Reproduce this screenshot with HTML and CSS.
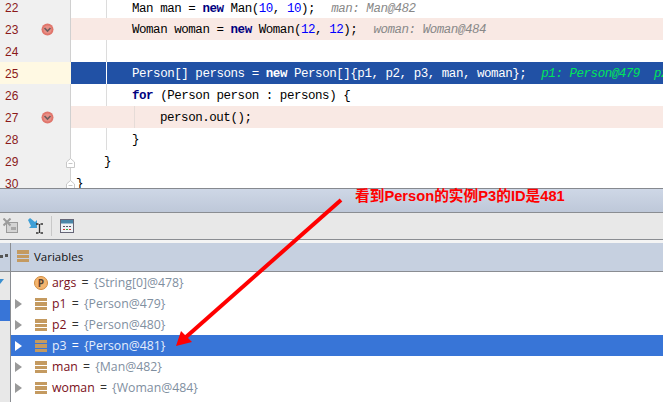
FILE: index.html
```html
<!DOCTYPE html>
<html lang="en">
<head>
<meta charset="utf-8">
<title>Debugger</title>
<link rel="stylesheet" href="styles.css">
</head>
<body>
<div class="app">
  <section class="editor">
    <div class="line first"><span class="num">22</span><span class="gut"></span><code class="code"><span class="i3"></span>Man man = <b>new</b> Man(<i>10</i>, <i>10</i>);<em class="hint">man: Man@482</em></code></div>
    <div class="line bp"><span class="num">23</span><span class="gut"><svg class="bpi" viewBox="0 0 13 13"><circle cx="6.5" cy="6.500" r="6" fill="#e0766c"/><circle cx="6.5" cy="6.500" r="4" fill="#e88f86"/><path d="M3.5 5l3 3 3-3" fill="none" stroke="#6e5f5f" stroke-width="1.7"/></svg></span><code class="code"><span class="i3"></span>Woman woman = <b>new</b> Woman(<i>12</i>, <i>12</i>);<em class="hint">woman: Woman@484</em></code></div>
    <div class="line"><span class="num">24</span><span class="gut"></span><code class="code"></code></div>
    <div class="line cur"><span class="num">25</span><span class="gut"></span><code class="code"><span class="i3"></span>Person[] persons = <b>new</b> Person[]{p1, p2, p3, man, woman};<em class="hint">p1: Person@479</em><em class="hint h2">p2: Person@480</em></code></div>
    <div class="line"><span class="num">26</span><span class="gut"></span><code class="code"><span class="i3"></span><b>for</b> (Person person : persons) {</code></div>
    <div class="line bp"><span class="num">27</span><span class="gut"><svg class="bpi" viewBox="0 0 13 13"><circle cx="6.5" cy="6.500" r="6" fill="#e0766c"/><circle cx="6.5" cy="6.500" r="4" fill="#e88f86"/><path d="M3.5 5l3 3 3-3" fill="none" stroke="#6e5f5f" stroke-width="1.7"/></svg></span><code class="code inner"><span class="i4"></span>person.out();</code></div>
    <div class="line"><span class="num">28</span><span class="gut"></span><code class="code"><span class="i3"></span>}</code></div>
    <div class="line noguide"><span class="num">29</span><span class="gut"><svg class="fold" viewBox="0 0 9 10"><path d="M.5 9.500V4L4.500.5 8.500 4v5.500z" fill="#fff" stroke="#c8c8c8"/><path d="M2.500 5.500h4" stroke="#c8c8c8"/></svg></span><code class="code"><span class="i2"></span>}</code></div>
    <div class="line noguide"><span class="num">30</span><span class="gut"><svg class="fold" viewBox="0 0 9 10"><path d="M.5 9.500V4L4.500.5 8.500 4v5.500z" fill="#fff" stroke="#c8c8c8"/><path d="M2.500 5.500h4" stroke="#c8c8c8"/></svg></span><code class="code"><span class="i1"></span>}</code></div>
  </section>
  <div class="titlebar"></div>
  <div class="toolbar">
    <svg class="tool t1" width="15" height="16" viewBox="0 0 15 16"><rect x="3.500" y="4.500" width="11" height="10" fill="#d4d4d4" stroke="#9a9a9a"/><rect x="8" y="9" width="5" height="3" fill="#a8a8a8"/><path d="M.5 .5l7 7M7.500 .5l-7 7" stroke="#9b9b9b" stroke-width="2"/></svg>
    <svg class="tool t2" width="16" height="16" viewBox="0 0 16 16"><path d="M0 2l2-2 5 4 2-2v8H1l2-2z" fill="#3d9fd6"/><path d="M8 6h2.500M12.500 6H15M8 15h2.500M12.500 15H15M11.500 6v9" stroke="#333" stroke-width="1.3" fill="none"/></svg>
    <span class="sep"></span>
    <svg class="tool" width="14" height="14" viewBox="0 0 14 14"><rect x=".5" y=".5" width="13" height="13" fill="#eef2f5" stroke="#667"/><rect x="1" y="1" width="12" height="3.500" fill="#4a86a8"/><path d="M3 7.500h2M6 7.500h2M9 7.500h2" stroke="#556"/><path d="M3 10.500h2" stroke="#d33"/><path d="M6 10.500h2" stroke="#3a3"/><path d="M9 10.500h2" stroke="#d33"/></svg>
  </div>
  <div class="gapline"></div>
  <div class="panel">
    <aside class="strip">
      <div class="strip-head"><span class="dots"><i></i><i></i></span></div>
      <div class="strip-arrow"></div>
      <div class="strip-sel"></div>
    </aside>
    <div class="vars">
      <header class="vars-head"><span class="stack"></span>Variables</header>
      <ul class="list">
        <li class="row"><span class="tw none"></span><span class="pbadge">P</span><span class="name">args</span> = <span class="val">{String[0]@478}</span></li>
        <li class="row"><span class="tw"></span><span class="stack small"></span><span class="name">p1</span> = <span class="val">{Person@479}</span></li>
        <li class="row"><span class="tw"></span><span class="stack small"></span><span class="name">p2</span> = <span class="val">{Person@480}</span></li>
        <li class="row sel"><span class="tw"></span><span class="stack small"></span><span class="name">p3</span> = <span class="val">{Person@481}</span></li>
        <li class="row"><span class="tw"></span><span class="stack small"></span><span class="name">man</span> = <span class="val">{Man@482}</span></li>
        <li class="row"><span class="tw"></span><span class="stack small"></span><span class="name">woman</span> = <span class="val">{Woman@484}</span></li>
      </ul>
    </div>
  </div>
  <div class="note">看到Person的实例P3的ID是481</div>
  <svg class="arrow" width="663" height="402" viewBox="0 0 663 402"><path d="M341 200L186 337" stroke="#ff0000" stroke-width="4" fill="none"/><path d="M176 346L181 331 192 342z" fill="#ff0000"/></svg>
</div>
</body>
</html>
```
FILE: styles.css
```css
* { box-sizing: border-box; }
html, body { margin: 0; padding: 0; }
body { width: 663px; height: 402px; overflow: hidden; background: #fff; }
.app { position: relative; width: 663px; height: 402px; overflow: hidden; display: flex; flex-direction: column; }

.editor { height: 188px; flex: none; overflow: hidden; background: #fff; }
.line { display: flex; height: 22px; position: relative; }
.line.first { height: 18px; align-items: flex-end; }
.num { width: 41px; flex: none; height: 100%; padding-left: 5px; background: #f0f0f0; color: #8b1a1a; font: 12px/24px "Liberation Sans", sans-serif; }
.first .num { line-height: 16px; }
.gut { width: 30px; flex: none; height: 100%; background: #f0f0f0; border-right: 1px solid #d0d0d0; display: flex; align-items: center; padding-left: 1px; position: relative; }
.code { flex: 1; min-width: 0; height: 100%; white-space: pre; font: 12.5px/24px "Liberation Mono", monospace; letter-spacing: -0.46px; color: #000; display: flex; position: relative; overflow: hidden; }
.first .code { line-height: 18px; }
.code::before { content: ""; position: absolute; left: 35px; top: 0; bottom: 0; width: 1px; background: #dcdcdc; }
.noguide .code::before { display: none; }
.code b { color: #000080; font-weight: 700; white-space: pre; }
.code i { color: #0000ff; font-style: normal; }
.i1 { width: 5px; flex: none; }
.i2 { width: 33px; flex: none; }
.i3 { width: 61px; flex: none; }
.i4 { width: 89px; flex: none; }
.hint { font-style: italic; color: #888; margin-left: 16px; }
.bp .code { background: #f9e9e4; }
.bp .code::before { display: none; }
.bp .inner::before { display: block; left: 63px; background: #e6dcd8; }
.bpi { width: 13px; height: 13px; margin-top: 0; margin-left: -1px; }
.cur .num { background: #fff9e3; }
.cur .gut { background: #fff9e3; border-right-color: #fff9e3; }
.cur .code { background: #2151a5; color: #fff; }
.cur .code::before { background: #fff; }
.cur .code b { color: #fff; }
.cur .hint { color: #00e65a; margin-left: 15px; }
.cur .hint.h2 { margin-left: 14px; }
.fold { position: absolute; right: -5px; top: 8px; width: 9px; height: 10px; z-index: 1; }

.titlebar { height: 25px; flex: none; background: linear-gradient(#ced7e6, #bec8d9); border-top: 1px solid #86898f; border-bottom: 1px solid #8a8d92; }
.toolbar { height: 27px; flex: none; display: flex; align-items: center; background: #e8e8e8; border-bottom: 1px solid #8a8d92; padding-left: 3px; }
.tool { flex: none; }
.t1 { margin-right: 10px; }
.t2 { margin-right: 7px; }
.sep { width: 1px; height: 20px; background: #c8c8c8; margin-right: 8px; }
.gapline { height: 3px; flex: none; background: #f4f4f4; }

.panel { flex: 1; display: flex; min-height: 0; }
.strip { width: 11px; flex: none; background: #e8e8e8; border-right: 1px solid #8a8d92; }
.strip-head { height: 29px; background: #c6d0e0; border-bottom: 1px solid #8a8d92; position: relative; }
.dots i { position: absolute; top: 12px; height: 3px; background: #555; }
.dots i:first-child { left: 0; width: 3px; }
.dots i:last-child { left: 5px; top: 11px; width: 3px; }
.strip-arrow { width: 0; height: 0; margin: 7px 0 0 -4px; border-top: 5px solid #3a8fd0; border-left: 4px solid transparent; border-right: 4px solid transparent; }
.strip-sel { height: 21px; margin-top: 16px; background: #3875d7; }

.vars { flex: 1; min-width: 0; background: #fff; font: 12.3px "Open Sans", sans-serif; }
.vars-head { height: 29px; display: flex; align-items: center; background: #c6d0e0; border-bottom: 1px solid #8a8d92; padding-left: 6px; color: #111; font-size: 11.5px; padding-bottom: 2px; }
.stack { width: 12px; height: 12px; flex: none; margin-right: 5px; background: repeating-linear-gradient(#c49a60 0 3.5px, #c6d0e0 3.5px 4.5px); }
.small { margin: 0 5px 0 1px; background: repeating-linear-gradient(#c49a60 0 3.5px, #fff 3.5px 4.5px); }
.sel .small { background: repeating-linear-gradient(#c49a60 0 3.5px, #3875d7 3.5px 4.5px); }
.list { list-style: none; margin: 0; padding: 0; }
.row { height: 21px; display: flex; align-items: center; white-space: pre; color: #333; padding-left: 4px; }
.row > .name { margin-right: 2px; }
.row > .val { margin-left: 2px; }
.tw { width: 0; height: 0; flex: none; margin-right: 12px; border-left: 7px solid #9a9a9a; border-top: 5px solid transparent; border-bottom: 5px solid transparent; }
.tw.none { border-left-color: transparent; }
.pbadge { width: 14px; height: 14px; flex: none; margin-right: 4px; margin-left: 0; border-radius: 50%; background: #f4b56f; border: 1px solid #d08c3e; color: #5a4030; font-size: 10px; font-weight: 700; display: flex; align-items: center; justify-content: center; }
.name { color: #7a0f1a; }
.val { color: #7f8f9f; }
.sel { background: #3875d7; color: #fff; }
.sel .name, .sel .val { color: #e6eefc; }
.sel .tw { border-left-color: #fff; }

.note { position: absolute; left: 355px; top: 186px; color: #ff0000; font: 700 14.7px/20px "Liberation Sans", "Noto Sans CJK SC", sans-serif; white-space: nowrap; }
.arrow { position: absolute; left: 0; top: 0; pointer-events: none; }
```
